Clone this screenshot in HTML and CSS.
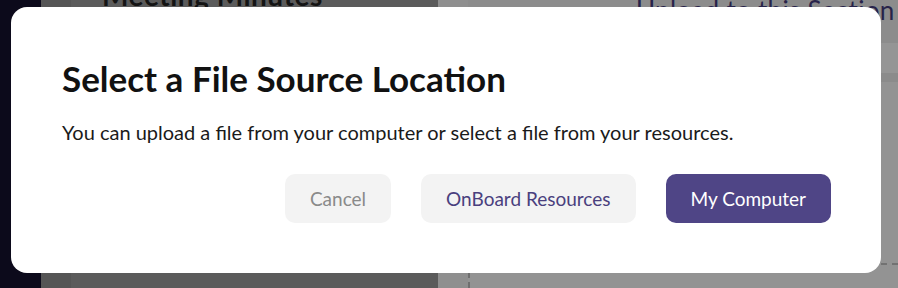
FILE: index.html
```html
<!DOCTYPE html>
<html lang="en">
<head>
<meta charset="utf-8">
<title>Select a File Source Location</title>
<link rel="stylesheet" href="styles.css">
</head>
<body>
<div class="app">
  <aside class="sidebar"></aside>
  <section class="left-panel">
    <div class="left-rail"></div>
    <div class="left-main">
      <h2 class="page-title">Meeting Minutes</h2>
    </div>
  </section>
  <section class="right-panel">
    <div class="right-rail"></div>
    <div class="right-main">
      <div class="right-head"><span class="upload-link">Upload to this Section</span></div>
      <div class="right-band"></div>
      <div class="right-body">
        <div class="dash-h"></div>
      </div>
    </div>
  </section>
</div>

<div class="modal" role="dialog" aria-labelledby="modal-title">
  <h1 class="modal-title" id="modal-title">Select a File Source Location</h1>
  <p class="modal-text">You can upload a file from your computer or select a file from your resources.</p>
  <div class="modal-actions">
    <button class="btn btn-cancel" type="button">Cancel</button>
    <button class="btn btn-secondary" type="button">OnBoard Resources</button>
    <button class="btn btn-primary" type="button">My Computer</button>
  </div>
</div>
</body>
</html>
```
FILE: styles.css
```css
* { box-sizing: border-box; }
html, body {
  margin: 0;
  padding: 0;
  width: 898px;
  height: 288px;
  overflow: hidden;
  font-family: Lato, "Noto Sans", sans-serif;
}
.app {
  display: flex;
  width: 898px;
  height: 288px;
}
.sidebar {
  width: 41px;
  background: #0c0a1b;
}
.left-panel {
  width: 397px;
  display: flex;
  background: #5b5b5b;
}
.left-rail {
  width: 30px;
  background: #555555;
}
.left-main {
  flex: 1;
  padding-left: 31px;
}
.page-title {
  margin: 0;
  margin-top: -22px;
  font-size: 28px;
  line-height: 34px;
  font-weight: 700;
  color: #141414;
  letter-spacing: 0.5px;
}
.right-panel {
  flex: 1;
  display: flex;
  background: #939393;
}
.right-rail {
  width: 30px;
  background: #8f8f8f;
}
.right-main {
  flex: 1;
  display: flex;
  flex-direction: column;
}
.right-head {
  height: 43px;
  background: #8c8c8c;
  padding-left: 168px;
  white-space: nowrap;
  overflow: hidden;
}
.upload-link {
  display: block;
  margin-top: -5px;
  font-size: 26px;
  line-height: 31px;
  color: #27234a;
  letter-spacing: 0.3px;
}
.right-band {
  height: 30px;
  background: #959595;
  border-bottom: 9px solid #8b8b8b;
  box-sizing: content-box;
}
.right-body {
  flex: 1;
  position: relative;
  border-left: 2px dashed #6f6f6f;
}
.dash-h {
  position: absolute;
  left: 400px;
  right: 0;
  top: 181px;
  border-top: 2px dashed #727272;
}
.modal {
  position: absolute;
  left: 11px;
  top: 7px;
  width: 870px;
  height: 266px;
  background: #ffffff;
  border-radius: 16px;
  padding: 50px 50px 50px 51px;
  display: flex;
  flex-direction: column;
}
.modal-title {
  margin: 0;
  font-size: 35px;
  line-height: 42px;
  font-weight: 700;
  color: #111111;
}
.modal-text {
  margin: 21px 0 0;
  font-size: 20px;
  line-height: 24px;
  color: #1a1a1a;
}
.modal-actions {
  margin-top: auto;
  display: flex;
  justify-content: flex-end;
  gap: 30px;
}
.btn {
  height: 49px;
  padding: 0 25px;
  border: none;
  border-radius: 10px;
  font-family: Lato, "Noto Sans", sans-serif;
  font-size: 19px;
  cursor: pointer;
}
.btn-cancel {
  background: #f3f3f3;
  color: #8a8a8a;
}
.btn-secondary {
  background: #f3f3f3;
  color: #4a3f7e;
}
.btn-primary {
  background: #4f4586;
  color: #ffffff;
}
```
